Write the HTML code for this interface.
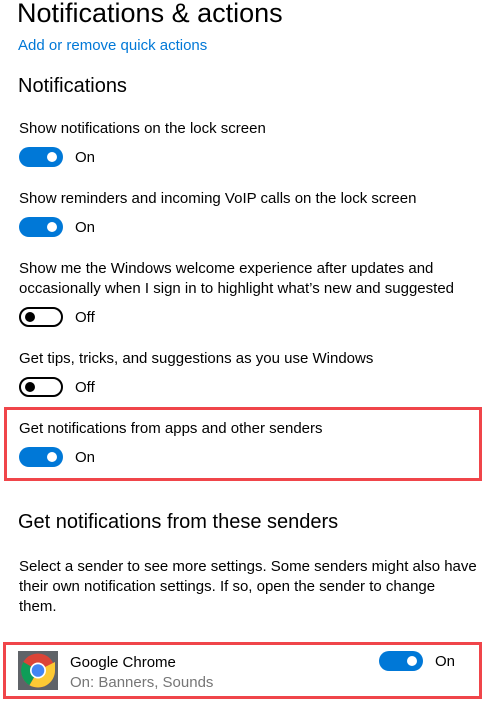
<!DOCTYPE html>
<html><head><style>
body{margin:0;width:484px;height:722px;background:#fff;font-family:"Liberation Sans",sans-serif;color:#000;position:relative;overflow:hidden}
.a{position:absolute;white-space:nowrap}
.t{font-size:15px}
.tg{position:absolute;width:44px;height:20px;border-radius:10px;box-sizing:border-box}
.on{background:#0078d7}
.on::after{content:"";position:absolute;right:6px;top:5px;width:10px;height:10px;border-radius:50%;background:#fff}
.off{border:2px solid #000;background:#fff}
.off::after{content:"";position:absolute;left:4px;top:3px;width:10px;height:10px;border-radius:50%;background:#000}
.box{position:absolute;border:3px solid #f0454a;box-sizing:border-box}
</style></head><body>
<div class="a" style="left:17px;top:-2px;font-size:27px;font-weight:300">Notifications &amp; actions</div>
<div class="a t" style="left:18px;top:37px;color:#0078d7">Add or remove quick actions</div>
<div class="a" style="left:18px;top:75px;font-size:20px">Notifications</div>

<div class="a t" style="left:19px;top:120px">Show notifications on the lock screen</div>
<div class="tg on" style="left:19px;top:147px"></div><div class="a t" style="left:75px;top:149px">On</div>

<div class="a t" style="left:19px;top:190px">Show reminders and incoming VoIP calls on the lock screen</div>
<div class="tg on" style="left:19px;top:217px"></div><div class="a t" style="left:75px;top:219px">On</div>

<div class="a t" style="left:19px;top:260px">Show me the Windows welcome experience after updates and</div>
<div class="a t" style="left:19px;top:280px">occasionally when I sign in to highlight what’s new and suggested</div>
<div class="tg off" style="left:19px;top:307px"></div><div class="a t" style="left:75px;top:309px">Off</div>

<div class="a t" style="left:19px;top:350px">Get tips, tricks, and suggestions as you use Windows</div>
<div class="tg off" style="left:19px;top:377px"></div><div class="a t" style="left:75px;top:379px">Off</div>

<div class="box" style="left:4px;top:407px;width:478px;height:74px"></div>
<div class="a t" style="left:19px;top:420px">Get notifications from apps and other senders</div>
<div class="tg on" style="left:19px;top:447px"></div><div class="a t" style="left:75px;top:449px">On</div>

<div class="a" style="left:18px;top:511px;font-size:20px">Get notifications from these senders</div>
<div class="a t" style="left:19px;top:558px">Select a sender to see more settings. Some senders might also have</div>
<div class="a t" style="left:19px;top:578px">their own notification settings. If so, open the sender to change</div>
<div class="a t" style="left:19px;top:598px">them.</div>

<div class="box" style="left:3px;top:642px;width:479px;height:57px"></div>
<svg class="a" style="left:18px;top:651px" width="40" height="39" viewBox="0 0 40 39">
<rect width="40" height="39" fill="#5f6368"/>
<circle cx="20" cy="19.5" r="17" fill="#db4437"/>
<path d="M20 19.5 L5.3 11 A17 17 0 0 0 11.5 34.2 Z" fill="#0f9d58"/>
<path d="M20 19.5 L11.5 34.2 A17 17 0 0 0 37 19.5 L37 11 Z" fill="#fcc934"/>
<circle cx="20" cy="19.5" r="8" fill="#fff"/>
<circle cx="20" cy="19.5" r="6.3" fill="#4285f4"/>
</svg>
<div class="a t" style="left:70px;top:654px">Google Chrome</div>
<div class="a t" style="left:70px;top:674px;color:#767676">On: Banners, Sounds</div>
<div class="tg on" style="left:379px;top:651px"></div><div class="a t" style="left:435px;top:653px">On</div>
</body></html>
